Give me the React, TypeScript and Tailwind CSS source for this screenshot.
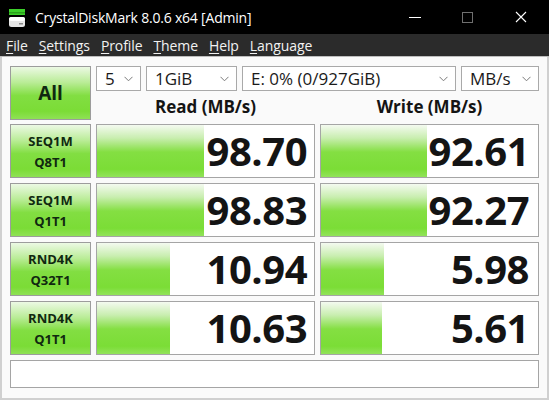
import type { ReactNode } from "react";

type Row = {
  line1: string;
  line2: string;
  read: string;
  readBar: number;
  write: string;
  writeBar: number;
};

const ROWS: Row[] = [
  { line1: "SEQ1M", line2: "Q8T1", read: "98.70", readBar: 107, write: "92.61", writeBar: 106 },
  { line1: "SEQ1M", line2: "Q1T1", read: "98.83", readBar: 107, write: "92.27", writeBar: 106 },
  { line1: "RND4K", line2: "Q32T1", read: "10.94", readBar: 73, write: "5.98", writeBar: 63 },
  { line1: "RND4K", line2: "Q1T1", read: "10.63", readBar: 73, write: "5.61", writeBar: 61 },
];

const MENU = ["File", "Settings", "Profile", "Theme", "Help", "Language"];

function AppIcon() {
  return (
    <svg width="18" height="20" viewBox="0 0 18 20">
      <rect x="1" y="1" width="16" height="6" fill="#3ccf2a" />
      <rect x="1" y="4" width="16" height="1.5" fill="#2a9f1c" />
      <rect x="1" y="9" width="16" height="10" rx="2.5" fill="#e6e6e6" />
      <rect x="1" y="9" width="16" height="4" rx="2" fill="#ffffff" />
      <rect x="11" y="15" width="4" height="1.5" fill="#8a8a8a" />
    </svg>
  );
}

function Combo({ width, children }: { width: string; children: ReactNode }) {
  return (
    <div
      className={`${width} flex h-[25px] items-center justify-between border border-[#a9a9a9] bg-white pl-[8px] pr-[7px] text-[17px] leading-none text-[#1a1a1a]`}
    >
      <span>{children}</span>
      <svg width="9" height="6" viewBox="0 0 9 6" className="mt-[1px]">
        <path d="M0.5 0.8 L4.5 4.8 L8.5 0.8" fill="none" stroke="#7a7a7a" strokeWidth="1" />
      </svg>
    </div>
  );
}

function GreenButton({ className, children }: { className?: string; children: ReactNode }) {
  return (
    <div
      className={`flex flex-col items-center justify-center border border-[#9c9c9c] bg-[linear-gradient(to_bottom,#ecf9e4_0%,#b9ec96_30%,#82de42_55%,#7bdc36_85%,#8fe155_100%)] font-bold text-[#102810] ${className ?? ""}`}
    >
      {children}
    </div>
  );
}

function ValueCell({ value, bar, pr }: { value: string; bar: number; pr: string }) {
  return (
    <div className="relative h-full border border-[#a5a5a5] bg-white">
      <div
        className="absolute bottom-0 left-0 top-0 bg-[linear-gradient(to_bottom,#f4faf0_0%,#c9eeb0_25%,#84df42_52%,#7bdd36_85%,#92e35a_100%)]"
        style={{ width: bar }}
      />
      <div
        className={`relative flex h-full items-center justify-end ${pr} text-[40px] font-bold leading-none tracking-[-0.5px] text-[#141414]`}
      >
        {value}
      </div>
    </div>
  );
}

export default function App() {
  return (
    <div className="flex h-[400px] w-[549px] flex-col overflow-hidden bg-white font-['Open_Sans','Noto_Sans',sans-serif]">
      <header className="flex h-[34px] items-center bg-black">
        <div className="ml-[8px] mr-[9px] mt-[2px]">
          <AppIcon />
        </div>
        <span className="text-[14px] tracking-[-0.2px] text-white">CrystalDiskMark 8.0.6 x64 [Admin]</span>
        <div className="ml-auto mr-[2px] flex h-full items-center">
          <div className="flex w-[53px] justify-center">
            <div className="h-px w-[12px] bg-white" />
          </div>
          <div className="flex w-[53px] justify-center">
            <div className="h-[11px] w-[11px] border border-[#6f6f6f]" />
          </div>
          <div className="flex w-[53px] justify-center">
            <svg width="12" height="12" viewBox="0 0 12 12">
              <path d="M1 1 L11 11 M11 1 L1 11" stroke="#ffffff" strokeWidth="1.1" />
            </svg>
          </div>
        </div>
      </header>

      <nav className="flex h-[23px] items-center gap-[11px] border-b border-[#bdbdbd] bg-[#2b2b2b] pl-[6px] text-[14px] tracking-[-0.1px] text-[#f2f2f2]">
        {MENU.map((m) => (
          <span key={m}>
            <span className="underline underline-offset-[2px]">{m[0]}</span>
            {m.slice(1)}
          </span>
        ))}
      </nav>

      <main className="flex flex-1 flex-col border-x-2 border-b-2 border-[#d0d0d0] bg-[#fafafa] px-[8px] pt-[9px]">
        <div className="grid grid-cols-[81px_219px_219px] gap-x-[5px]">
          <GreenButton className="row-span-2 h-[54px] text-[19px]">All</GreenButton>
          <div className="col-span-2 flex gap-[5px]">
            <Combo width="w-[45px]">5</Combo>
            <Combo width="w-[91px]">1GiB</Combo>
            <Combo width="w-[214px]">E: 0% (0/927GiB)</Combo>
            <Combo width="w-[78px]">MB/s</Combo>
          </div>
          <div className="flex h-[29px] items-center justify-center pt-[2px] text-[17px] font-bold text-[#141414]">
            Read (MB/s)
          </div>
          <div className="flex h-[29px] items-center justify-center pt-[2px] text-[17px] font-bold text-[#141414]">
            Write (MB/s)
          </div>
        </div>

        <div className="mt-[4px] grid grid-cols-[81px_219px_219px] gap-x-[5px] gap-y-[5px]">
          {ROWS.map((r, i) => (
            <div key={i} className="contents">
              <GreenButton className="h-[54px] gap-[3px] text-[13px] leading-[18px]">
                <span>{r.line1}</span>
                <span>{r.line2}</span>
              </GreenButton>
              <div className="h-[54px]">
                <ValueCell value={r.read} bar={r.readBar} pr="pr-[7px]" />
              </div>
              <div className="h-[54px]">
                <ValueCell value={r.write} bar={r.writeBar} pr="pr-[9px]" />
              </div>
            </div>
          ))}
        </div>

        <div className="mt-[5px] h-[28px] border border-[#a5a5a5] bg-white" />
      </main>
    </div>
  );
}
